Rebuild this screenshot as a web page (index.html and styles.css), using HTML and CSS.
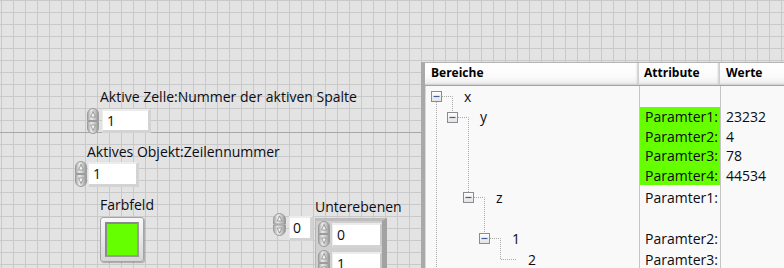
FILE: index.html
```html
<!DOCTYPE html>
<html lang="de">
<head>
<meta charset="utf-8">
<title>Front Panel</title>
<link rel="stylesheet" href="styles.css">
</head>
<body>
<svg class="defs" width="0" height="0" aria-hidden="true">
  <defs>
    <linearGradient id="spinG" x1="0" y1="0" x2="1" y2="0">
      <stop offset="0" stop-color="#a4a4a4"/>
      <stop offset="0.35" stop-color="#e9e9e9"/>
      <stop offset="0.7" stop-color="#c4c4c4"/>
      <stop offset="1" stop-color="#8e8e8e"/>
    </linearGradient>
    <linearGradient id="boxG" x1="0" y1="0" x2="0" y2="1">
      <stop offset="0" stop-color="#ffffff"/>
      <stop offset="1" stop-color="#e2e2e2"/>
    </linearGradient>
  </defs>
</svg>

<div class="panel">
  <div class="guide"></div>

  <!-- Aktive Zelle -->
  <div class="ctl c-zelle">
    <div class="label l-zelle">Aktive Zelle:Nummer der aktiven Spalte</div>
    <div class="numeric">
      <svg class="spin" width="12" height="26" viewBox="0 0 12 26">
        <path d="M0.5 12.5V6a5.5 5.5 0 0 1 11 0v6.5z" fill="url(#spinG)" stroke="#9c9c9c"/>
        <path d="M0.5 13.5V20a5.5 5.5 0 0 0 11 0v-6.5z" fill="url(#spinG)" stroke="#9c9c9c"/>
        <polygon points="6,3.5 3.6,9 8.4,9" fill="#f6f6f6" stroke="#808080" stroke-width="0.7"/>
        <polygon points="6,22.5 3.6,17 8.4,17" fill="#f6f6f6" stroke="#808080" stroke-width="0.7"/>
      </svg>
      <div class="field f-zelle">1</div>
    </div>
  </div>

  <!-- Aktives Objekt -->
  <div class="ctl c-objekt">
    <div class="label l-objekt">Aktives Objekt:Zeilennummer</div>
    <div class="numeric">
      <svg class="spin" width="12" height="26" viewBox="0 0 12 26">
        <path d="M0.5 12.5V6a5.5 5.5 0 0 1 11 0v6.5z" fill="url(#spinG)" stroke="#9c9c9c"/>
        <path d="M0.5 13.5V20a5.5 5.5 0 0 0 11 0v-6.5z" fill="url(#spinG)" stroke="#9c9c9c"/>
        <polygon points="6,3.5 3.6,9 8.4,9" fill="#f6f6f6" stroke="#808080" stroke-width="0.7"/>
        <polygon points="6,22.5 3.6,17 8.4,17" fill="#f6f6f6" stroke="#808080" stroke-width="0.7"/>
      </svg>
      <div class="field f-objekt">1</div>
    </div>
  </div>

  <!-- Farbfeld -->
  <div class="ctl c-farb">
    <div class="label">Farbfeld</div>
    <div class="swatch-frame"><div class="swatch"></div></div>
  </div>

  <!-- Array index -->
  <div class="ctl c-index">
    <svg class="spin" width="13" height="23" viewBox="0 0 13 23">
      <path d="M0.5 11V6.5a6 6 0 0 1 12 0V11z" fill="url(#spinG)" stroke="#9c9c9c"/>
      <path d="M0.5 12V16.5a6 6 0 0 0 12 0V12z" fill="url(#spinG)" stroke="#9c9c9c"/>
      <polygon points="6.5,3 4.2,8 8.8,8" fill="#f6f6f6" stroke="#808080" stroke-width="0.7"/>
      <polygon points="6.5,20 4.2,15 8.8,15" fill="#f6f6f6" stroke="#808080" stroke-width="0.7"/>
    </svg>
    <div class="field f-index">0</div>
  </div>

  <!-- Unterebenen array -->
  <div class="ctl c-array">
    <div class="label">Unterebenen</div>
    <div class="array-frame">
      <div class="numeric a-el">
        <svg class="spin" width="12" height="26" viewBox="0 0 12 26">
          <path d="M0.5 12.5V6a5.5 5.5 0 0 1 11 0v6.5z" fill="url(#spinG)" stroke="#9c9c9c"/>
          <path d="M0.5 13.5V20a5.5 5.5 0 0 0 11 0v-6.5z" fill="url(#spinG)" stroke="#9c9c9c"/>
          <polygon points="6,3.5 3.6,9 8.4,9" fill="#f6f6f6" stroke="#808080" stroke-width="0.7"/>
          <polygon points="6,22.5 3.6,17 8.4,17" fill="#f6f6f6" stroke="#808080" stroke-width="0.7"/>
        </svg>
        <div class="field f-arr">0</div>
      </div>
      <div class="numeric a-el">
        <svg class="spin" width="12" height="26" viewBox="0 0 12 26">
          <path d="M0.5 12.5V6a5.5 5.5 0 0 1 11 0v6.5z" fill="url(#spinG)" stroke="#9c9c9c"/>
          <path d="M0.5 13.5V20a5.5 5.5 0 0 0 11 0v-6.5z" fill="url(#spinG)" stroke="#9c9c9c"/>
          <polygon points="6,3.5 3.6,9 8.4,9" fill="#f6f6f6" stroke="#808080" stroke-width="0.7"/>
          <polygon points="6,22.5 3.6,17 8.4,17" fill="#f6f6f6" stroke="#808080" stroke-width="0.7"/>
        </svg>
        <div class="field f-arr">1</div>
      </div>
    </div>
  </div>

  <!-- Tree control -->
  <div class="ctl tree">
    <div class="tree-head">
      <div class="th th-main">Bereiche</div>
      <div class="th th-attr">Attribute</div>
      <div class="th th-val">Werte</div>
    </div>
    <div class="tree-body">
      <svg class="tree-lines" width="214" height="200" viewBox="0 0 214 200">
        <g fill="none" stroke="#a9a9a9" stroke-dasharray="1 1">
          <path d="M17 10.5H27.5V26"/>
          <path d="M11.5 16V200"/>
          <path d="M33 31.5H43.5V106"/>
          <path d="M49 111.5H59.5V147"/>
          <path d="M65 152.5H75.5V173.5H91"/>
        </g>
        <g fill="url(#boxG)" stroke="#8c8c8c">
          <rect x="6.5" y="5.5" width="10" height="10"/>
          <rect x="22.5" y="26.5" width="10" height="10"/>
          <rect x="38.5" y="106.5" width="10" height="10"/>
          <rect x="54.5" y="147.5" width="10" height="10"/>
        </g>
        <g stroke="#3f5e9e" stroke-width="1.2">
          <path d="M8.5 10.5H14.5"/>
          <path d="M24.5 31.5H30.5"/>
          <path d="M40.5 111.5H46.5"/>
          <path d="M56.5 152.5H62.5"/>
        </g>
      </svg>

      <div class="tr r-x">
        <div class="td td-main lvl0">x</div>
        <div class="td td-attr"></div>
        <div class="td td-val"></div>
      </div>
      <div class="tr r-y">
        <div class="td td-main lvl1">y</div>
        <div class="td td-attr">
          <div class="hl">
            <div class="ln">Paramter1:</div>
            <div class="ln">Paramter2:</div>
            <div class="ln">Paramter3:</div>
            <div class="ln">Paramter4:</div>
          </div>
        </div>
        <div class="td td-val">
          <div class="ln">23232</div>
          <div class="ln">4</div>
          <div class="ln">78</div>
          <div class="ln">44534</div>
        </div>
      </div>
      <div class="tr r-z">
        <div class="td td-main lvl2">z</div>
        <div class="td td-attr"><div class="ln">Paramter1:</div></div>
        <div class="td td-val"></div>
      </div>
      <div class="tr r-1">
        <div class="td td-main lvl3">1</div>
        <div class="td td-attr"><div class="ln">Paramter2:</div></div>
        <div class="td td-val"></div>
      </div>
      <div class="tr r-2">
        <div class="td td-main lvl4">2</div>
        <div class="td td-attr"><div class="ln">Paramter3:</div></div>
        <div class="td td-val"></div>
      </div>
    </div>
  </div>
</div>
</body>
</html>
```

FILE: styles.css
```css
html, body {
  margin: 0;
  padding: 0;
}

body {
  font-family: "Open Sans", "Noto Sans", "DejaVu Sans", sans-serif;
  font-size: 14px;
  color: #0c0c14;
}

.defs {
  position: absolute;
  width: 0;
  height: 0;
  overflow: hidden;
}

.panel {
  position: relative;
  width: 784px;
  height: 268px;
  overflow: hidden;
  background-color: #e3e3e3;
  background-image:
    linear-gradient(to right, #c9c9c9 1px, transparent 1px),
    linear-gradient(to bottom, #c9c9c9 1px, transparent 1px);
  background-size: 12px 12px;
  background-position: 1px 0;
}

.guide {
  position: absolute;
  left: 0;
  right: 0;
  top: 132px;
  height: 1px;
  background: #a7a7a7;
}

/* free-canvas front panel objects */
.ctl {
  position: absolute;
  display: flex;
  flex-direction: column;
  align-items: flex-start;
}

.label {
  line-height: 17px;
  white-space: nowrap;
}

.c-zelle { left: 87px; top: 88px; }
.l-zelle { margin-left: 13px; }

.c-objekt { left: 75px; top: 143px; }
.l-objekt { margin-left: 12px; }

.c-farb { left: 100px; top: 196px; }

.c-index {
  left: 273px;
  top: 213px;
  flex-direction: row;
}

.c-array { left: 315px; top: 198px; }

.numeric {
  display: flex;
  align-items: flex-start;
  margin-top: 3px;
}

.spin {
  display: block;
  flex: none;
}

.field {
  box-sizing: border-box;
  background: #ffffff;
  border-top: 2px solid #ececec;
  border-left: 1px solid #ececec;
  border-right: 3px solid #d3d3d3;
  border-bottom: 3px solid #d3d3d3;
  padding-left: 4px;
  line-height: 19px;
  font-size: 14px;
}

.f-zelle {
  width: 49px;
  height: 24px;
  margin-left: 3px;
  margin-top: 1px;
}

.c-objekt .numeric { margin-top: 1px; }

.f-objekt {
  width: 51px;
  height: 25px;
  margin-left: 1px;
  margin-top: 1px;
}

.f-index {
  width: 24px;
  height: 25px;
  margin-left: 3px;
  margin-top: 3px;
  padding-left: 3px;
}

/* colour box */
.swatch-frame {
  box-sizing: border-box;
  width: 44px;
  height: 45px;
  margin-top: 4px;
  padding: 4px 4px;
  border: 1px solid #a4a4a4;
  border-radius: 3px;
  background: linear-gradient(#f8f8f8, #d6d6d6);
  box-shadow: 1px 1px 1px rgba(0, 0, 0, 0.25);
}

.swatch {
  box-sizing: border-box;
  width: 100%;
  height: 100%;
  background: #66ff00;
  border: 2px solid #9a9a9a;
  border-top-color: #8a8a8a;
  border-left-color: #8a8a8a;
}

/* array */
.array-frame {
  box-sizing: border-box;
  width: 72px;
  height: 60px;
  margin-top: 3px;
  padding: 0 0 0 2px;
  border-top: 3px solid #bdbdbd;
  border-left: 1px solid #b8b8b8;
  border-right: 5px solid #a2a2a2;
  background: #d0d0d0;
  display: flex;
  flex-direction: column;
  gap: 2px;
}

.a-el { margin-top: 0; }

.f-arr {
  width: 52px;
  height: 25px;
  margin-left: 2px;
  margin-top: 2px;
  border-right-width: 2px;
  border-right-color: #c8c8c8;
}

/* tree control */
.tree {
  left: 421px;
  top: 62px;
  width: 380px;
  height: 220px;
  box-sizing: border-box;
  border-top: 1px solid #b4b4b4;
  border-left: 4px solid #a9a9a9;
  background: #f9f9f9;
  align-items: stretch;
  box-shadow: inset 1px 0 0 #d8d8d8;
}

.tree-head {
  display: grid;
  grid-template-columns: 214px 81px 1fr;
  height: 22px;
  border-bottom: 1px solid #a3a3a3;
  background: #ffffff;
}

.th {
  font-weight: 700;
  font-size: 12px;
  line-height: 19px;
  color: #000;
  background: linear-gradient(#ffffff, #fbfbfb 60%, #ececec);
  box-shadow: inset -3px -2px 2px -1px #cdcdcd;
}

.th-main { padding-left: 6px; }
.th-attr { padding-left: 5px; }
.th-val { padding-left: 6px; }

.tree-body {
  position: relative;
  flex: 1;
}

.tree-lines {
  position: absolute;
  left: 0;
  top: 0;
  pointer-events: none;
}

.tr {
  display: grid;
  grid-template-columns: 214px 81px 1fr;
}

.td {
  box-sizing: border-box;
  line-height: 19.5px;
  font-size: 14px;
  white-space: nowrap;
}

.td-attr,
.td-val {
  border-left: 1px solid #c4c4c4;
}

.ln { padding-left: 5px; }
.td-val .ln { padding-left: 5px; }

.hl { background: #66ff00; }

.r-x { height: 21px; }
.r-y { height: 80px; }
.r-z { height: 41px; }
.r-1 { height: 21px; }
.r-2 { height: 21px; }

.r-x .td, .r-1 .td, .r-2 .td { padding-top: 1px; }
.r-z .td { padding-top: 0.5px; }

.lvl0 { padding-left: 39px; }
.lvl1 { padding-left: 55px; }
.lvl2 { padding-left: 71px; }
.lvl3 { padding-left: 87px; }
.lvl4 { padding-left: 103px; }
```
